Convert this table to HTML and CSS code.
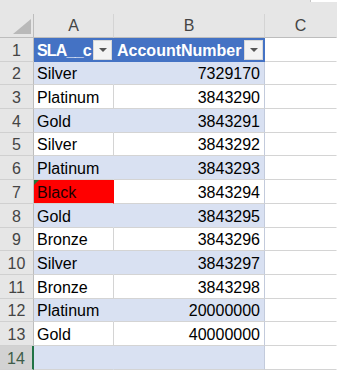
FILE: index.html
```html
<!DOCTYPE html>
<html>
<head>
<meta charset="utf-8">
<link rel="stylesheet" href="styles.css">
</head>
<body>
<div class="topstrip"><div class="namebox"></div></div>
<div class="sheet">
  <div class="corner"><svg width="18" height="15" viewBox="0 0 18 15"><polygon points="0,15 18,15 18,0" fill="#b9b9b9"/></svg></div>
  <div class="colhead">A</div>
  <div class="colhead">B</div>
  <div class="colhead c">C</div>

  <div class="rowhead">1</div>
  <div class="th tight">SLA__c<span class="filter"><svg width="8" height="4" viewBox="0 0 8 4"><polygon points="0,0 8,0 4,4" fill="#555"/></svg></span></div>
  <div class="th">AccountNumber<span class="filter"><svg width="8" height="4" viewBox="0 0 8 4"><polygon points="0,0 8,0 4,4" fill="#555"/></svg></span></div>
  <div class="cell c"></div>

  <div class="rowhead">2</div><div class="cell band">Silver</div><div class="cell band num last">7329170</div><div class="cell c"></div>
  <div class="rowhead">3</div><div class="cell">Platinum</div><div class="cell num last">3843290</div><div class="cell c"></div>
  <div class="rowhead">4</div><div class="cell band">Gold</div><div class="cell band num last">3843291</div><div class="cell c"></div>
  <div class="rowhead">5</div><div class="cell">Silver</div><div class="cell num last">3843292</div><div class="cell c"></div>
  <div class="rowhead">6</div><div class="cell band">Platinum</div><div class="cell band num last">3843293</div><div class="cell c"></div>
  <div class="rowhead">7</div><div class="cell red">Black<span class="flag"></span></div><div class="cell num last">3843294</div><div class="cell c"></div>
  <div class="rowhead">8</div><div class="cell band">Gold</div><div class="cell band num last">3843295</div><div class="cell c"></div>
  <div class="rowhead">9</div><div class="cell">Bronze</div><div class="cell num last">3843296</div><div class="cell c"></div>
  <div class="rowhead">10</div><div class="cell band">Silver</div><div class="cell band num last">3843297</div><div class="cell c"></div>
  <div class="rowhead">11</div><div class="cell">Bronze</div><div class="cell num last">3843298</div><div class="cell c"></div>
  <div class="rowhead">12</div><div class="cell band">Platinum</div><div class="cell band num last">20000000</div><div class="cell c"></div>
  <div class="rowhead">13</div><div class="cell">Gold</div><div class="cell num last">40000000</div><div class="cell c"></div>
  <div class="rowhead sel">14</div><div class="cell band"></div><div class="cell band last"></div><div class="cell c"></div>
</div>
</body>
</html>
```

FILE: styles.css
```css
html, body {
  margin: 0;
  padding: 0;
  background: #ffffff;
  overflow: hidden;
  font-family: "Liberation Sans", Arial, sans-serif;
}

.topstrip {
  height: 14px;
  background: #e6e6e6;
  display: flex;
  justify-content: flex-end;
}

.namebox {
  width: 26px;
  height: 2px;
  background: #ffffff;
  border-left: 1px solid #c6c6c6;
}

.sheet {
  display: grid;
  grid-template-columns: 34px 80px 151px 72px;
  grid-template-rows: 24px repeat(14, 23.7px);
  width: 337px;
}

.sheet > div {
  box-sizing: border-box;
  border-right: 1px solid #d4d4d4;
  border-bottom: 1px solid #d4d4d4;
  font-size: 16px;
  white-space: nowrap;
  overflow: hidden;
}

.sheet > .c {
  border-right-color: transparent;
}

.corner {
  background: #e6e6e6;
  display: flex;
  align-items: flex-end;
  justify-content: flex-end;
  padding: 0 2px 3px 0;
  border-right-color: #bdbdbd !important;
  border-bottom-color: #bdbdbd !important;
}

.corner svg {
  display: block;
}

.colhead {
  background: #e6e6e6;
  color: #444444;
  display: flex;
  align-items: center;
  justify-content: center;
  border-right-color: #c6c6c6;
  border-bottom-color: #bdbdbd !important;
  padding-top: 1px;
}

.rowhead {
  background: #e6e6e6;
  color: #444444;
  display: flex;
  align-items: flex-end;
  justify-content: center;
  padding-bottom: 1px;
  border-right-color: #bdbdbd !important;
  border-bottom-color: #d0d0d0 !important;
}

.rowhead.sel {
  background: #d2d2d2;
  color: #3d5c49;
  border-right: 2px solid #217346 !important;
}

.th {
  position: relative;
  background: #4472c4;
  color: #ffffff;
  font-weight: bold;
  display: flex;
  align-items: flex-end;
  padding: 0 0 1px 3px;
  border-right-color: #4472c4 !important;
  border-bottom-color: #4472c4 !important;
}

.th.tight {
  letter-spacing: -0.8px;
}

.filter {
  position: absolute;
  right: 1px;
  top: 2px;
  width: 19px;
  height: 20px;
  box-sizing: border-box;
  background: #f3f3f3;
  border: 1px solid #d8d8d8;
  display: flex;
  align-items: center;
  justify-content: center;
}

.filter svg {
  display: block;
}

.cell {
  display: flex;
  align-items: flex-end;
  padding: 0 3px 1px 3px;
  color: #000000;
}

.num {
  justify-content: flex-end;
  padding-right: 4px;
}

.band {
  background: #d9e1f2;
  border-right-color: #d9e1f2 !important;
}

.band.last,
.last {
  border-right-color: #c3cbdc !important;
}

.red {
  position: relative;
  background: #ff0000;
  border-right-color: #ff0000 !important;
  color: #1a0000;
}

.flag {
  position: absolute;
  left: 0;
  top: 0;
  width: 0;
  height: 0;
  border-top: 5px solid #1f7a3a;
  border-right: 5px solid transparent;
}
```
